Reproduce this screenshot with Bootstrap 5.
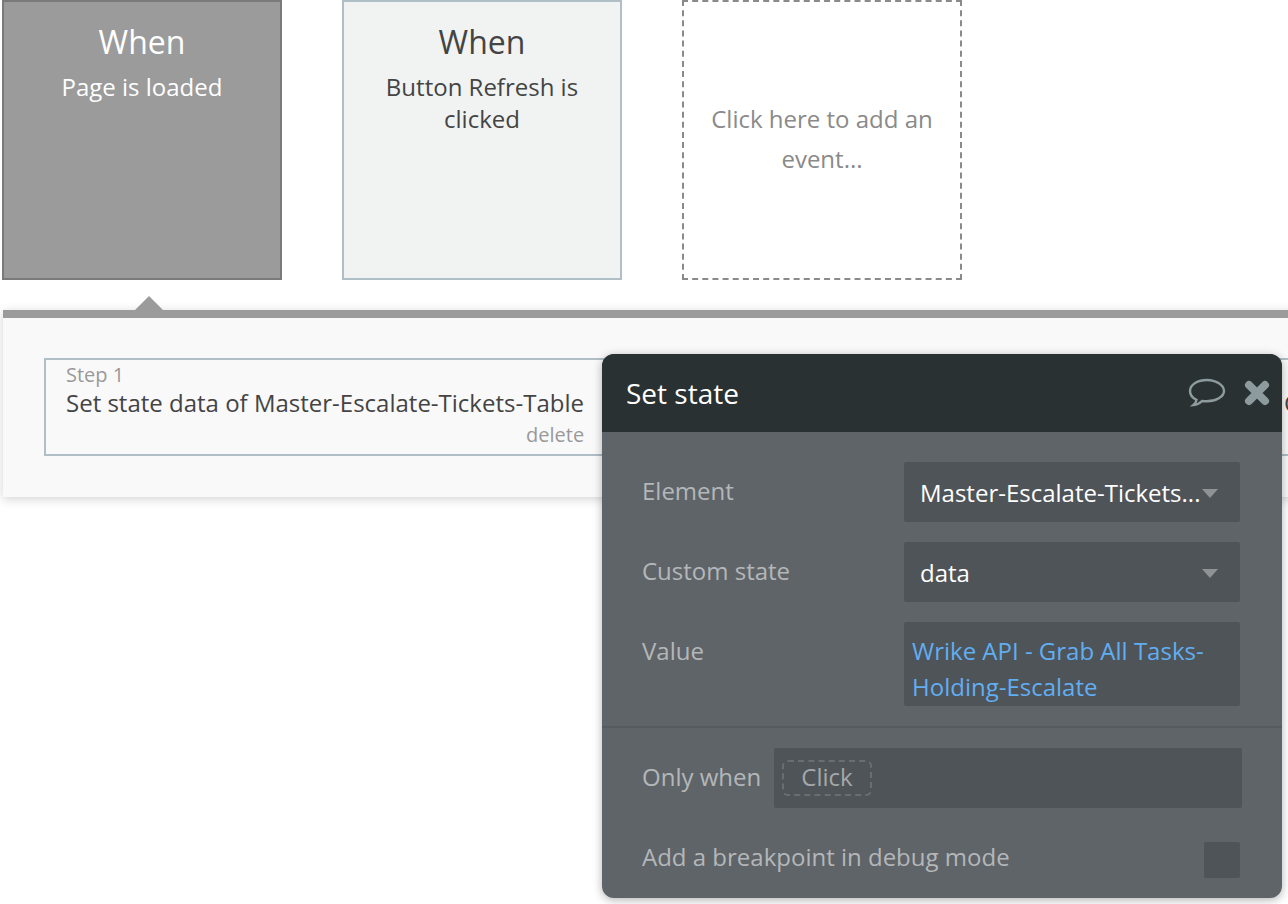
<!DOCTYPE html>
<html lang="en">
<head>
<meta charset="utf-8">
<title>Set state</title>
<link href="https://cdn.jsdelivr.net/npm/bootstrap@5.3.0/dist/css/bootstrap.min.css" rel="stylesheet">
<style>
html,body{height:904px;overflow:hidden;background:#fff}
body{font-family:"Open Sans","Noto Sans",sans-serif;font-weight:400;position:relative;font-size:24px;color:#444}
.tile-row{padding-left:2px;gap:60px}
.tile{width:280px;height:280px;border:2px solid;text-align:center;padding:18px 20px 0;flex:none}
.tile-h{font-size:32px;line-height:44px}
.tile-t{font-size:24px;line-height:32px;margin-top:7px}
.tile-on{background:#9b9b9b;border-color:#7a7a7a;color:#fff}
.tile-off{background:#f1f3f2;border-color:#b0bec5;color:#444}
.tile-add{border:2px dashed #8a8a8a;color:#8a8a8a;font-size:24px;line-height:40px;padding:0 24px 2px;justify-content:center;align-items:center}
.flow{margin:30px 0 0 3px;height:187px;width:1400px;background:#f9f9f9;border-top:8px solid #9b9b9b;box-shadow:0 2px 10px rgba(0,0,0,.18);position:relative;padding:40px 0 0 41px}
.flow-tip{position:absolute;left:132px;top:-22px;width:0;height:0;border-left:14px solid transparent;border-right:14px solid transparent;border-bottom:14px solid #9b9b9b}
.step{width:1300px;height:98px;border:2px solid #b0bec5;padding:3px 20px;position:relative}
.step-k{font-size:20px;line-height:24px;color:#999}
.step-v{font-size:24px;line-height:32px;color:#444}
.step-x{position:absolute;left:480px;top:62px;font-size:20px;line-height:26px;color:#999}
.step-c{position:absolute;left:1238px;top:27px;color:#444;line-height:32px}
.pop{position:absolute;left:602px;top:354px;width:680px;height:544px;background:#5f6468;border-radius:12px;box-shadow:0 2px 10px rgba(0,0,0,.3);color:#b4b7b9}
.pop-h{height:78px;background:#2a3133;border-radius:12px 12px 0 0;color:#fff;padding:0 12px 0 24px;font-size:28px}
.ico{color:#8d9a9e;gap:18px}
.pop-b{padding:30px 42px 0 40px}
.fld{height:60px;margin-bottom:20px}
.lbl{font-size:24px;line-height:60px;margin-top:-1px}
.ctl{width:336px;flex:none;background:#4f5458;border-radius:2px;color:#fff;font-size:24px;padding:2px 16px 0;height:60px}
.ctl-t{overflow:hidden;white-space:nowrap;flex:1}
.caret{width:0;height:0;border-left:8px solid transparent;border-right:8px solid transparent;border-top:9px solid #8f9396;flex:none;margin-right:6px}
.val{width:336px;height:84px;background:#4f5458;border-radius:2px;color:#61aef2;font-size:24px;line-height:36px;padding:11px 8px 0;flex:none}
.sep{border-top:2px solid #565b5f;margin-top:20px}
.only{padding:20px 40px 0 40px;height:80px}
.only .lbl{margin-top:-1px;width:132px;flex:none}
.only-c{width:468px;height:60px;background:#4f5458;border-radius:2px;padding:12px 8px;flex:none}
.chip{display:block;width:90px;height:36px;border:2px dashed #696e72;border-radius:6px;color:#a5a8aa;text-align:center;font-size:24px;line-height:30px}
.bp{padding:25px 42px 0 40px}
.bp .lbl{margin-top:-6px}
.box{width:36px;height:36px;background:#4f5458;border-radius:2px;flex:none}
</style>
</head>
<body>
<div class="d-flex tile-row">
  <div class="tile tile-on"><div class="tile-h">When</div><div class="tile-t">Page is loaded</div></div>
  <div class="tile tile-off"><div class="tile-h">When</div><div class="tile-t">Button Refresh is clicked</div></div>
  <div class="tile tile-add d-flex text-center"><div>Click here to add an event...</div></div>
</div>
<div class="flow">
  <div class="flow-tip"></div>
  <div class="step">
    <div class="step-k">Step 1</div>
    <div class="step-v">Set state data of Master-Escalate-Tickets-Table</div>
    <div class="step-x">delete</div>
    <div class="step-c">C</div>
  </div>
</div>
<div class="pop">
  <div class="pop-h d-flex align-items-center justify-content-between">
    <span>Set state</span>
    <span class="ico d-flex align-items-center">
      <svg width="38" height="32" viewBox="0 0 38 32" fill="none" stroke="currentColor" stroke-width="2.400"><path d="M19 3C10 3 2 7.500 2 14c0 4 2.500 7 6.500 8.800-.3 2.200-1.500 4-3 5.200 3-.3 6.500-1.800 8.500-4 1.300.2 3.700.3 5 .3 9 0 17-4.600 17-10.300S28 3 19 3z"/></svg>
      <svg width="26" height="26" viewBox="0 0 26 26" fill="none" stroke="currentColor" stroke-width="8" stroke-linecap="round" stroke-linejoin="round"><path d="M5 5l16 16M21 5L5 21"/></svg>
    </span>
  </div>
  <div class="pop-b">
    <div class="fld d-flex justify-content-between">
      <div class="lbl">Element</div>
      <div class="ctl d-flex align-items-center"><span class="ctl-t">Master-Escalate-Tickets...</span><span class="caret"></span></div>
    </div>
    <div class="fld d-flex justify-content-between">
      <div class="lbl">Custom state</div>
      <div class="ctl d-flex align-items-center"><span class="ctl-t">data</span><span class="caret"></span></div>
    </div>
    <div class="d-flex justify-content-between">
      <div class="lbl">Value</div>
      <div class="val">Wrike API - Grab All Tasks-Holding-Escalate</div>
    </div>
  </div>
  <div class="sep"></div>
  <div class="only d-flex">
    <div class="lbl">Only when</div>
    <div class="only-c"><span class="chip">Click</span></div>
  </div>
  <div class="bp d-flex justify-content-between align-items-center">
    <div class="lbl">Add a breakpoint in debug mode</div>
    <div class="box"></div>
  </div>
</div>
<script src="https://cdn.jsdelivr.net/npm/bootstrap@5.3.0/dist/js/bootstrap.bundle.min.js"></script>
</body>
</html>
